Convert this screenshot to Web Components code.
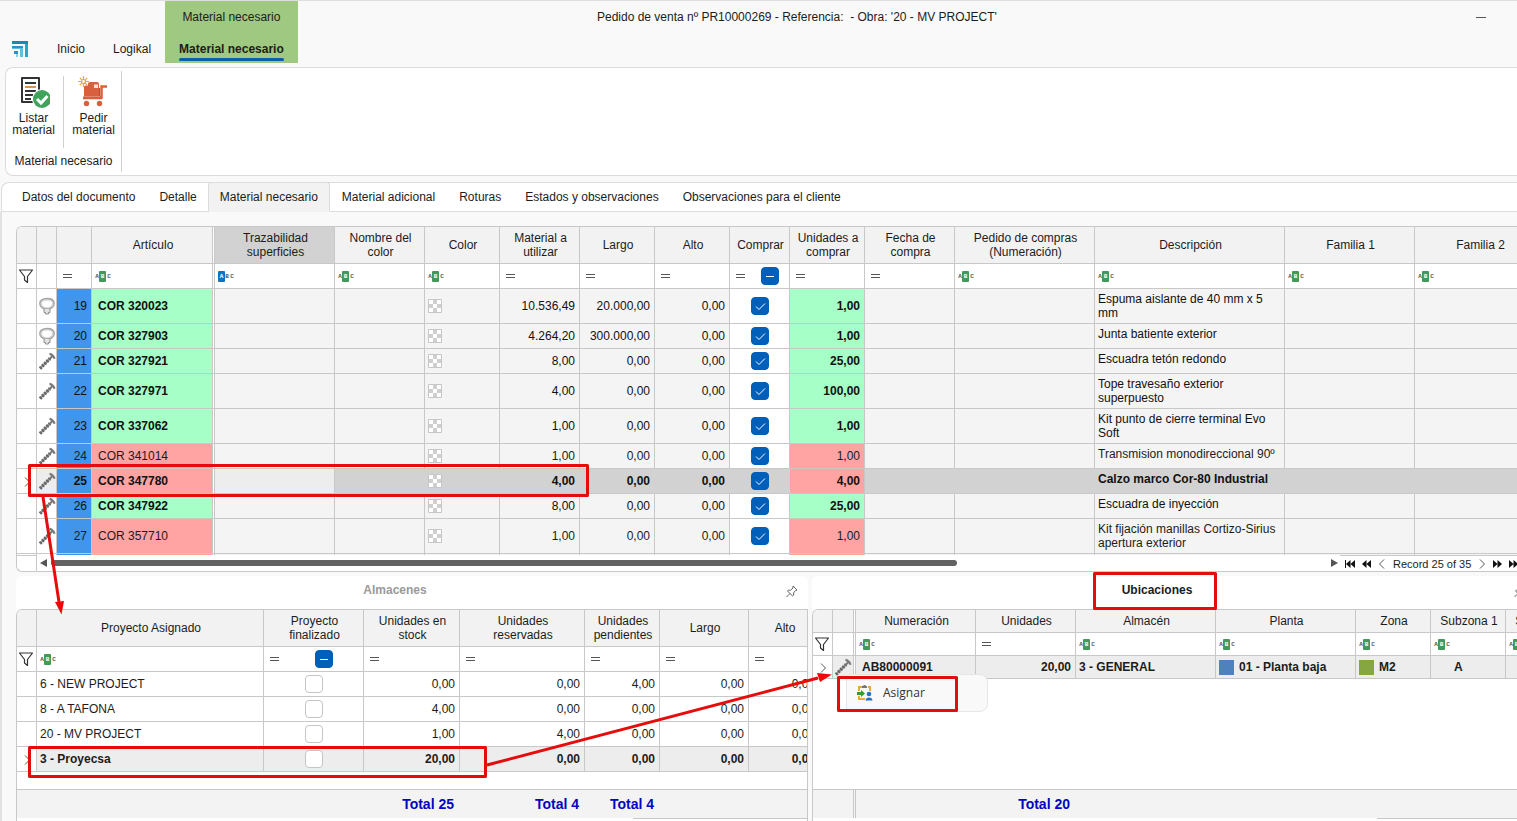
<!DOCTYPE html>
<html lang="es">
<head>
<meta charset="utf-8">
<title>Pedido de venta</title>
<style>
  html, body { margin: 0; height: 100%; }
  body { font: 12px/14px "Liberation Sans", Arial, sans-serif; color: #1c1c1c; background: #f9f9f9; overflow: hidden; }
</style>
</head>
<body>
<app-window></app-window>
<script>
const ICONS = {
  logo: [18, 18, '<path d="M1 1h16v16h-3V4H1z" fill="#2aa3d0"/><path d="M1 1h16v3H1z" fill="#1c86b8"/><path d="M1 6h11v11H9V9H1z" fill="#62bfe0"/><path d="M1 6h11v2H1z" fill="#2a93c4"/><path d="M3 11h4v6H5v-3H3z" fill="#8ad0ea"/><path d="M3 11h4v3H3z" fill="#2a93c4"/>'],
  list: [32, 32, '<path d="M21 18V2H4v24h11" fill="#fff" stroke="#333" stroke-width="2" stroke-linejoin="round"/><path d="M7 7h11M7 15h11M7 19h8M7 23h6" stroke="#333" stroke-width="1.800"/><path d="M7 11h11" stroke="#d9924e" stroke-width="2"/><circle cx="24" cy="23" r="10" fill="#fff"/><circle cx="24" cy="23" r="9" fill="#3fa45b"/><path d="M19 23l4 4 6.500-7" fill="none" stroke="#fff" stroke-width="3"/>'],
  cart: [32, 32, '<path d="M6 20v-9q0-1.500 1.500-1.500H10V8q0-2 2-2h7q2 0 2 2v12z" fill="#d8603f"/><path d="M16 8.500h4v3.500h-4z" fill="#f7e3dc"/><path d="M21 12h1v8h-1z" fill="#b94e33"/><path d="M29 10.500h-5.500v11h-18M24 22h-19" stroke="#d8603f" stroke-width="2.500" fill="none"/><circle cx="8.500" cy="27.500" r="2.700" fill="#d8603f"/><circle cx="21.500" cy="27.500" r="2.700" fill="#d8603f"/><circle cx="5.500" cy="5.500" r="4" fill="#fff"/><path d="M5.500 0v3M5.500 8v3M0 5.500h3M8 5.500h3M1.800 1.800l2 2M7.200 7.200l2 2M1.800 9.200l2-2M7.200 3.800l2-2" stroke="#e6a649" stroke-width="1.200"/><circle cx="5.500" cy="5.500" r="2" fill="#fff" stroke="#e6a649" stroke-width="1.200"/>'],
  funnel: [16, 16, '<path d="M1.500 2h13L9.500 8.500v6l-3-2.500V8.500z" fill="none" stroke="#333" stroke-width="1.200" stroke-linejoin="round"/>'],
  equals: [9, 5, '<path d="M0 .5h9M0 3.500h9" stroke="#555"/>'],
  gasket: [18, 18, '<path d="M9 1.500C4.500 1.500 1.800 3.500 1.800 6.500s3 5 5.200 5.500h4c2.200-.5 5.200-2.500 5.200-5.500s-2.700-5-7.200-5z" fill="#d8d8d8" stroke="#a4a4a4" stroke-width="1.400"/><path d="M9 3.500C5.800 3.500 4 4.800 4 6.500S6 10 8 10.300h2c2-.3 4-2.100 4-3.800s-1.800-3-5-3z" fill="#fff"/><path d="M6 12v3.500h1.500V17h3v-1.500H12V12" fill="#e2e2e2" stroke="#8e8e8e"/>'],
  screw: [18, 18, '<path d="M2 16.500L12 6.500" stroke="#9a9a9a" stroke-width="2"/><path d="M2 16.500L12 6.500" stroke="#666" stroke-width="3.400" stroke-dasharray="2 1.200"/><path d="M11 7.500L15 3.500" stroke="#777" stroke-width="2"/><path d="M11.500 1.800c2 .2 4.500 2.700 5 5" fill="none" stroke="#7a7a7a" stroke-width="2.200"/>'],
  texture: [14, 14, '<path d="M.5.5h13v13H.5z" fill="#fff" stroke="#c6c6c6"/><path d="M5 1h4v4H5zM1 5h4v4H1zM9 5h4v4H9zM5 9h4v4H5z" fill="#cfcfcf"/>'],
  chevron: [8, 10, '<path d="M2 .5L6.500 5 2 9.500" fill="none" stroke="#555" stroke-width="1"/>'],
  back: [8, 10, '<path d="M6 .5L1.500 5 6 9.500" fill="none" stroke="#555" stroke-width="1"/>'],
  triLeft: [7, 8, '<path d="M7 0v8L0 4z" fill="#555"/>'],
  triRight: [7, 8, '<path d="M0 0v8l7-4z" fill="#555"/>'],
  first: [10, 8, '<path d="M0 0h1v8H0zM5.500 0v8L1 4zM10 0v8L5.500 4z" fill="#111"/>'],
  rewind: [9, 8, '<path d="M4.500 0v8L0 4zM9 0v8L4.500 4z" fill="#111"/>'],
  forward: [9, 8, '<path d="M0 0v8l4.500-4zM4.500 0v8L9 4z" fill="#111"/>'],
  last: [10, 8, '<path d="M0 0v8l4.500-4zM4.500 0v8L9 4zM9 0h1v8H9z" fill="#111"/>'],
  pin: [12, 12, '<path d="M7 1l4 4-1 .5-.5 0-2 2.500.3 2L6.500 11 1.500 6l1-1 2 .3L7 3z" fill="none" stroke="#666"/><path d="M4 8.500L.5 12" stroke="#666"/>'],
  assign: [16, 16, '<path d="M5 2H2v4M11 2h2v4M2 11v3h6" fill="none" stroke="#e8aa3a" stroke-width="2"/><path d="M5 3V1h1.500V0h2v1H10v2z" fill="#777"/><path d="M0 7h4V5l4 3.500L4 12v-2H0z" fill="#2d9a3c"/><circle cx="12" cy="9" r="2.300" fill="#1f73c9"/><path d="M8.500 15.500c0-4 7-4 7 0z" fill="#1f73c9"/>'],
  minimize: [10, 1, '<path d="M0 0h10v1H0z" fill="#555"/>']
};

class UiIcon extends HTMLElement {
  connectedCallback() {
    const [w, h, body] = ICONS[this.getAttribute('name')];
    this.attachShadow({ mode: 'open' }).innerHTML =
      `<style>:host{display:inline-flex;flex:none}svg{display:block}</style>
       <svg width="${w}" height="${h}" viewBox="0 0 ${w} ${h}" aria-hidden="true">${body}</svg>`;
  }
}
customElements.define('ui-icon', UiIcon);

/* Text filter marker: "contains" highlights B, "starts with" highlights A */
class AbcMark extends HTMLElement {
  connectedCallback() {
    const start = this.hasAttribute('start');
    this.attachShadow({ mode: 'open' }).innerHTML =
      `<style>
        :host{display:inline-flex;flex:none;align-items:center;height:11px;font:bold 6px/11px "Liberation Mono",monospace;color:#555}
        span{width:4px;text-align:center}
        span:last-child{margin-left:1px}
        .on{width:7px;border-radius:1px;color:#fff;background:${start ? '#0b74c8' : '#43995a'}}
      </style>${start ? '<span class="on">A</span><span>B</span><span>C</span>' : '<span>A</span><span class="on">B</span><span>C</span>'}`;
  }
}
customElements.define('abc-mark', AbcMark);

class CheckBox extends HTMLElement {
  connectedCallback() {
    const state = this.getAttribute('state');
    this.attachShadow({ mode: 'open' }).innerHTML =
      `<style>
        :host{display:inline-flex;flex:none}
        input{appearance:none;box-sizing:border-box;width:18px;height:18px;margin:0;border:1px solid #c4c4c4;border-radius:4px;background:#fff center/18px 18px no-repeat}
        input:checked,input:indeterminate{border-color:#005fb8;background-color:#005fb8}
        label{display:grid;position:relative}
        svg{position:absolute;inset:0;pointer-events:none}
      </style>
      <label><input type="checkbox" aria-label="${this.getAttribute('label')}"${state === 'on' ? ' checked' : ''}>
      <svg width="18" height="18" fill="none" stroke="#fff">${state === 'on' ? '<path d="M5 9.500l3 3 6-6"/>' : state === 'mixed' ? '<path d="M5 9.500h8"/>' : ''}</svg></label>`;
    this.shadowRoot.querySelector('input').indeterminate = state === 'mixed';
  }
}
customElements.define('check-box', CheckBox);

/* Grid with header, filter row and body; columns and rows are set as properties */
class DataGrid extends HTMLElement {
  set data({ cols, rows, head, totals }) {
    const root = this.shadowRoot || this.attachShadow({ mode: 'open' });
    const width = cols.reduce((s, c) => s + c.w, 0);
    const group = `<colgroup>${cols.map(c => `<col style="width:${c.w}px">`).join('')}</colgroup>`;
    const cls = c => [c.a || 'l', c.split ? 'split' : '', c.cls || ''].join(' ');
    const filter = c => {
      const name = (c.t || 'fila').replace('\n', ' ');
      const box = `<input type="text" aria-label="Filtro ${name}">`;
      if (c.f === 'funnel') return '<ui-icon name="funnel"></ui-icon>';
      if (c.f === 'abc') return `<div class="f"><abc-mark${c.start ? ' start' : ''}></abc-mark>${box}</div>`;
      if (c.f === 'eq') return `<div class="f eq"><ui-icon name="equals"></ui-icon>${box}</div>`;
      if (c.f === 'check') return `<div class="f eq"><ui-icon name="equals"></ui-icon><div class="mid"><check-box state="mixed" label="Filtro ${name}"></check-box></div></div>`;
      return '';
    };
    root.innerHTML = `<style>
      :host{display:flex;flex-direction:column;flex:1;min-height:0;overflow:hidden;border:1px solid #c8c8c8;border-width:1px 0 0 1px;border-top-left-radius:6px;background:#fff}
      .view{flex:1;min-height:0;overflow:hidden}
      table{table-layout:fixed;width:${width}px;border-spacing:0}
      th,td{box-sizing:border-box;padding:0 3px;border:solid #c8c8c8;border-width:0 1px 1px 0;overflow:hidden;background-clip:padding-box !important}
      .split{border-right:3px double #c8c8c8}
      th{height:${head}px;padding:0 2px 0 4px;background:#f2f2f2;font-weight:normal;white-space:pre-line}
      th.sel{background:#d2d2d2}
      .filters td{height:${head > 30 ? 25 : 23}px;background:#fff;text-align:left}
      .filters td.ind{padding:0 1px}
      .f{display:flex;align-items:center;gap:2px}
      .f.eq{padding-left:3px;gap:8px}
      .f input{flex:1;width:0;min-width:0;height:16px;box-sizing:border-box;border:0;padding:0;background:none;font:inherit;outline:0}
      .mid{flex:1;display:flex;justify-content:center;margin-right:-1px}
      ui-icon,check-box{vertical-align:middle}
      .l{text-align:left}.c{text-align:center}.r{text-align:right}
      th{text-align:center}
      tbody td.r{padding-right:4px}
      tbody td.pad{padding-left:6px}
      tbody td.top{vertical-align:top;padding-top:3px}
      tbody td.ind{padding:0;text-align:center}
      tbody td.pic{padding:0;text-align:center}
      tbody td.ro{background:#f4f4f4}
      tbody td.num{background:#4195ea}
      tbody .green td.st{background:#a5ffc6}
      tbody .red td.st{background:#ffa3a3}
      .b td{color:#111}
      .b td.bold,.cur td{font-weight:bold}
      .cur td.pic,.cur td.lite{background:#ededed}
      .cur td.full{background:#d2d2d2;border-right-color:#d2d2d2}
      .sw{display:flex;align-items:center;gap:5px}
      .sw i{width:15px;height:15px;background:var(--c)}
      .totals{flex:none;height:28px;border-top:1px solid #c8c8c8;background:#f3f3f3;overflow:hidden}
      .totals td{height:28px;border-bottom:0;border-right-color:transparent;padding:0 5px;text-align:right;font:bold 14px/16px "Liberation Sans",Arial,sans-serif;color:#0505c0}
      .totals td.split{border-right-color:#c8c8c8}
      .strip{flex:none;height:3px;display:flex;justify-content:flex-end}
      .strip i{width:22%;border-top:1px solid #c8c8c8}
    </style>
    <div class="view"><table>${group}
      <thead><tr>${cols.map(c => `<th scope="col" class="${c.split ? 'split' : ''} ${c.sel ? 'sel' : ''}">${c.t || ''}</th>`).join('')}</tr>
      <tr class="filters">${cols.map(c => `<td class="${cls(c)}">${filter(c)}</td>`).join('')}</tr></thead>
      <tbody>${rows.map(r => `<tr class="${r.c || ''}" style="height:${r.h}px">${cols.map((c, i) => `<td class="${cls(c)}">${r.v[i] ?? ''}</td>`).join('')}</tr>`).join('')}</tbody>
    </table></div>
    ${totals ? `<div class="totals"><table>${group}<tr>${cols.map((c, i) => `<td class="${c.split ? 'split' : ''}">${totals[i] || ''}</td>`).join('')}</tr></table></div><div class="strip"><i></i></div>` : ''}`;
  }
}
customElements.define('data-grid', DataGrid);

class AppHeader extends HTMLElement {
  connectedCallback() {
    this.attachShadow({ mode: 'open' }).innerHTML = `<style>
      :host{display:flex;height:62px;border-top:1px solid #dedede}
      .logo{width:43px;box-sizing:border-box;padding:39px 0 0 11px}
      nav{display:flex;align-items:flex-end}
      a{display:block;padding:0 14px;line-height:28px;color:inherit;text-decoration:none}
      .ctx{background:#9fc880;text-align:center}
      .ctx span{display:block;line-height:32px;height:34px}
      .ctx a{font-weight:bold;height:28px}
      .ctx a::after{content:"";display:block;height:3px;margin:-5px 0 2px;border-radius:2px;background:#0b5fa5}
      h1{flex:1;margin:0;font:inherit;line-height:32px;text-align:center;white-space:nowrap}
      .win{width:221px;display:flex;justify-content:flex-end;align-items:flex-start;box-sizing:border-box;padding-right:13px}
      button{width:46px;height:32px;border:0;padding:0;background:none;display:grid;place-items:center}
    </style>
    <div class="logo"><ui-icon name="logo"></ui-icon></div>
    <nav><a href="#inicio">Inicio</a><a href="#logikal">Logikal</a>
    <div class="ctx"><span>Material necesario</span><a href="#material">Material necesario</a></div></nav>
    <h1>Pedido de venta nº PR10000269 - Referencia:&nbsp; - Obra: '20 - MV PROJECT'</h1>
    <div class="win"><button aria-label="Minimizar"><ui-icon name="minimize"></ui-icon></button></div>`;
  }
}
customElements.define('app-header', AppHeader);

class RibbonButton extends HTMLElement {
  connectedCallback() {
    this.attachShadow({ mode: 'open' }).innerHTML = `<style>
      :host{display:block;width:55px}
      button{width:100%;height:72px;border:0;padding:0;background:none;color:inherit;font:12px/12px "Liberation Sans",Arial,sans-serif;display:flex;flex-direction:column;align-items:center;gap:4px}
    </style><button><ui-icon name="${this.getAttribute('icon')}"></ui-icon><span><slot></slot></span></button>`;
  }
}
customElements.define('ribbon-button', RibbonButton);

class RibbonBar extends HTMLElement {
  connectedCallback() {
    this.attachShadow({ mode: 'open' }).innerHTML = `<style>
      :host{display:block;margin:4px 0 0 5px;height:107px;border:1px solid #dcdcdc;border-right:0;border-radius:8px 0 0 8px;background:#fff}
      .group{display:flex;flex-direction:column;width:115px;height:101px;margin-top:3px;border-right:1px solid #d0d0d4;box-sizing:content-box}
      .row{display:flex;gap:2px;padding-top:5px}
      .sep{width:1px;background:#d0d0d4}
      .name{text-align:center;padding-top:6px}
    </style>
    <div class="group"><div class="row"><ribbon-button icon="list">Listar<br>material</ribbon-button><div class="sep"></div><ribbon-button icon="cart">Pedir<br>material</ribbon-button></div>
    <div class="name">Material necesario</div></div>`;
  }
}
customElements.define('ribbon-bar', RibbonBar);

class DocTabs extends HTMLElement {
  connectedCallback() {
    const tabs = ['Datos del documento', 'Detalle', 'Material necesario', 'Material adicional', 'Roturas', 'Estados y observaciones', 'Observaciones para el cliente'];
    this.attachShadow({ mode: 'open' }).innerHTML = `<style>
      :host{display:flex;height:28px;margin:6px 0 0 1px;padding-left:8px;border:1px solid #dcdcdc;border-right:0;border-radius:8px 0 0 0;background:#fff}
      a{padding:0 12px;line-height:28px;color:inherit;text-decoration:none;white-space:nowrap}
      .on{padding:0 11px;margin:-1px 0 -1px -1px;border:1px solid #dcdcdc;border-bottom-color:#f2f2f2;border-radius:4px 4px 0 0;background:#f2f2f2}
    </style>${tabs.map((t, i) => `<a href="#t${i}"${i === 2 ? ' class="on" aria-current="page"' : ''}>${t}</a>`).join('')}`;
  }
}
customElements.define('doc-tabs', DocTabs);

class RecordBar extends HTMLElement {
  connectedCallback() {
    this.attachShadow({ mode: 'open' }).innerHTML = `<style>
      :host{display:flex;flex:none;height:16px;border:1px solid #c8c8c8;border-width:0 0 1px 1px;border-bottom-left-radius:6px;background:#fff}
      .corner{width:19px;box-sizing:border-box;width:20px;border:1px solid #c8c8c8;border-width:1px 1px 0 0}
      .scroll{flex:1;display:flex;align-items:center;gap:4px;padding:0 2px 0 3px}
      .track{flex:1}
      .thumb{width:71%;height:6px;border-radius:3px;background:#636363}
      .pager{display:flex;align-items:center;gap:7px;width:172px;padding-left:5px;border-top:1px solid #c8c8c8;overflow:hidden;white-space:nowrap;font-size:11px}
      button{border:0;padding:0;background:none;display:flex;flex:none}
    </style>
    <div class="corner"></div>
    <div class="scroll"><ui-icon name="triLeft"></ui-icon><div class="track"><div class="thumb"></div></div><ui-icon name="triRight"></ui-icon></div>
    <div class="pager"><button aria-label="Primero"><ui-icon name="first"></ui-icon></button><button aria-label="Página anterior"><ui-icon name="rewind"></ui-icon></button><button aria-label="Anterior"><ui-icon name="back"></ui-icon></button><span>Record 25 of 35</span><button aria-label="Siguiente"><ui-icon name="chevron"></ui-icon></button><button aria-label="Página siguiente"><ui-icon name="forward"></ui-icon></button><button aria-label="Último"><ui-icon name="last"></ui-icon></button></div>`;
  }
}
customElements.define('record-bar', RecordBar);

class DockPanel extends HTMLElement {
  connectedCallback() {
    this.attachShadow({ mode: 'open' }).innerHTML = `<style>
      :host{display:flex;flex-direction:column;position:relative;min-width:0;background:#fff;border-radius:6px 6px 0 0}
      header{display:flex;align-items:center;height:33px;flex:none}
      h2{flex:1;margin:0;padding-bottom:5px;font:bold 12px/14px "Liberation Sans",Arial,sans-serif;text-align:center;color:var(--title,#1c1c1c)}
      button{width:34px;height:30px;border:0;padding:0 0 0 2px;background:none;display:grid;place-items:center;margin-bottom:4px}
    </style><header><h2>${this.getAttribute('heading')}</h2><button aria-label="Fijar panel"><ui-icon name="pin"></ui-icon></button></header><slot></slot>`;
  }
}
customElements.define('dock-panel', DockPanel);

class ContextMenu extends HTMLElement {
  connectedCallback() {
    this.attachShadow({ mode: 'open' }).innerHTML = `<style>
      :host{display:block;box-sizing:border-box;width:142px;height:38px;padding:1px;border:1px solid #e6e6e6;border-radius:4px 8px 8px 4px;background:#f9f9f9}
      button{display:flex;align-items:center;gap:10px;width:100%;height:34px;padding:0 9px;border:0;background:none;color:#333;font:12px/16px "Open Sans","Noto Sans",sans-serif}
    </style><button role="menuitem"><ui-icon name="assign"></ui-icon><slot></slot></button>`;
  }
}
customElements.define('context-menu', ContextMenu);

/* Red callouts drawn over the window */
class CalloutLayer extends HTMLElement {
  connectedCallback() {
    this.attachShadow({ mode: 'open' }).innerHTML = `<style>
      :host{position:absolute;inset:0;pointer-events:none;overflow:hidden}svg{display:block;width:100%;height:100%}
    </style><svg fill="none" stroke="#e60c0c" stroke-width="3" stroke-linejoin="round">
      <rect x="29.500" y="465.500" width="558" height="30"/><rect x="29.500" y="747.500" width="456" height="29"/>
      <rect x="1094.500" y="573.500" width="121" height="35"/><rect x="838.500" y="677.500" width="118" height="33"/>
      <path d="M43 497L59 602M487 765L818 678"/>
      <path d="M55 602l9-1-2.500 13.500zM817 673l3 9 12-7.500z" fill="#f00808" stroke="none"/></svg>`;
  }
}
customElements.define('callout-layer', CalloutLayer);

class AppWindow extends HTMLElement {
  connectedCallback() {
    const root = this.attachShadow({ mode: 'open' });
    root.innerHTML = `<style>
      :host{display:flex;flex-direction:column;height:100vh;position:relative;overflow:hidden}
      app-header,ribbon-bar,doc-tabs{flex:none}
      main{flex:1;min-height:0;display:flex;flex-direction:column;box-sizing:border-box;padding:14px 0 0 14px;border-left:2px solid #e2e2e2}
      .docks{flex:none;display:grid;grid-template-columns:792fr 724fr;gap:4px;height:245px;margin:4px -19px 0 0}
      .alm{--title:#9a9a9a}
      .alm data-grid{border-right-width:1px}
      context-menu{position:absolute;left:34px;top:98px}
    </style>
    <app-header></app-header><ribbon-bar></ribbon-bar><doc-tabs></doc-tabs>
    <main><data-grid id="mat"></data-grid><record-bar></record-bar>
      <div class="docks">
        <dock-panel class="alm" heading="Almacenes"><data-grid id="alm"></data-grid></dock-panel>
        <dock-panel heading="Ubicaciones"><data-grid id="ubi"></data-grid><context-menu role="menu">Asignar</context-menu></dock-panel>
      </div></main>
    <callout-layer></callout-layer>`;
    const icon = n => `<ui-icon name="${n}"></ui-icon>`;
    const check = (s, l) => `<check-box state="${s}" label="${l}"></check-box>`;
    const mat = (h, pic, n, code, used, largo, units, desc, color, bold, cur) => ({
      h, c: `${color} ${bold ? 'b' : ''} ${cur ? 'cur' : ''}`,
      v: [cur ? icon('chevron') : '', pic && icon(pic), n, code, '', '', pic && icon('texture'), used, largo, pic && '0,00', pic && check('on', 'Comprar ' + code), units, '', '', desc, '', '']
    });
    root.getElementById('mat').data = {
      head: 37,
      cols: [
        { w: 20, f: 'funnel', cls: 'ind' }, { w: 20, cls: 'pic' }, { w: 35, f: 'eq', a: 'r', cls: 'num' },
        { w: 123, t: 'Artículo', f: 'abc', split: 1, cls: 'st pad bold' },
        { w: 120, t: 'Trazabilidad\nsuperficies', f: 'abc', start: 1, sel: 1, cls: 'ro lite' },
        { w: 90, t: 'Nombre del\ncolor', f: 'abc', cls: 'ro full' }, { w: 75, t: 'Color', f: 'abc', cls: 'ro full' },
        { w: 80, t: 'Material a\nutilizar', f: 'eq', a: 'r', cls: 'ro full' }, { w: 75, t: 'Largo', f: 'eq', a: 'r', cls: 'ro full' },
        { w: 75, t: 'Alto', f: 'eq', a: 'r', cls: 'ro full' }, { w: 60, t: 'Comprar', f: 'check', a: 'c', cls: 'full' },
        { w: 75, t: 'Unidades a\ncomprar', f: 'eq', a: 'r', cls: 'st bold' }, { w: 90, t: 'Fecha de\ncompra', f: 'eq', cls: 'ro full' },
        { w: 140, t: 'Pedido de compras\n(Numeración)', f: 'abc', cls: 'ro full' }, { w: 190, t: 'Descripción', f: 'abc', cls: 'ro full top' },
        { w: 130, t: 'Familia 1', f: 'abc', cls: 'ro full' }, { w: 130, t: 'Familia 2', f: 'abc', cls: 'ro full' }
      ],
      rows: [
        mat(35, 'gasket', 19, 'COR 320023', '10.536,49', '20.000,00', '1,00', 'Espuma aislante de 40 mm x 5 mm', 'green', 1),
        mat(25, 'gasket', 20, 'COR 327903', '4.264,20', '300.000,00', '1,00', 'Junta batiente exterior', 'green', 1),
        mat(25, 'screw', 21, 'COR 327921', '8,00', '0,00', '25,00', 'Escuadra tetón redondo', 'green', 1),
        mat(35, 'screw', 22, 'COR 327971', '4,00', '0,00', '100,00', 'Tope travesaño exterior superpuesto', 'green', 1),
        mat(35, 'screw', 23, 'COR 337062', '1,00', '0,00', '1,00', 'Kit punto de cierre terminal Evo Soft', 'green', 1),
        mat(25, 'screw', 24, 'COR 341014', '1,00', '0,00', '1,00', 'Transmision monodireccional 90º', 'red', 0),
        mat(25, 'screw', 25, 'COR 347780', '4,00', '0,00', '4,00', 'Calzo marco Cor-80 Industrial', 'red', 1, 1),
        mat(25, 'screw', 26, 'COR 347922', '8,00', '0,00', '25,00', 'Escuadra de inyección', 'green', 1),
        mat(35, 'screw', 27, 'COR 357710', '1,00', '0,00', '1,00', 'Kit fijación manillas Cortizo-Sirius apertura exterior', 'red', 0),
        mat(25, '', '', '', '', '', '', '', 'red', 0)
      ]
    };
    const alm = (name, s, r, p, cur) => ({ h: 25, c: cur ? 'cur' : '', v: [cur ? icon('chevron') : '', name, check('off', 'Finalizado ' + name), s, r, p, '0,00', '0,00'] });
    root.getElementById('alm').data = {
      head: 37,
      cols: [
        { w: 20, f: 'funnel', cls: 'ind' }, { w: 227, t: 'Proyecto Asignado', f: 'abc', cls: 'lite' },
        { w: 100, t: 'Proyecto\nfinalizado', f: 'check', a: 'c', cls: 'lite' }, { w: 96, t: 'Unidades en\nstock', f: 'eq', a: 'r', cls: 'lite' },
        { w: 125, t: 'Unidades\nreservadas', f: 'eq', a: 'r', cls: 'lite' }, { w: 75, t: 'Unidades\npendientes', f: 'eq', a: 'r', cls: 'lite' },
        { w: 89, t: 'Largo', f: 'eq', a: 'r', cls: 'lite' }, { w: 71, t: 'Alto', f: 'eq', a: 'r', cls: 'lite' }
      ],
      rows: [alm('6 - NEW PROJECT', '0,00', '0,00', '4,00'), alm('8 - A TAFONA', '4,00', '0,00', '0,00'), alm('20 - MV PROJECT', '1,00', '4,00', '0,00'), alm('3 - Proyecsa', '20,00', '0,00', '0,00', 1)],
      totals: ['', '', '', 'Total 25', 'Total 4', 'Total 4', '', '']
    };
    const sw = (c, t) => `<div class="sw"><i style="--c:${c}"></i>${t}</div>`;
    root.getElementById('ubi').data = {
      head: 23,
      cols: [
        { w: 20, f: 'funnel', cls: 'ind' }, { w: 23, split: 1, cls: 'pic' }, { w: 120, t: 'Numeración', f: 'abc', cls: 'lite pad' },
        { w: 100, t: 'Unidades', f: 'eq', a: 'r', cls: 'lite' }, { w: 140, t: 'Almacén', f: 'abc', cls: 'lite' }, { w: 140, t: 'Planta', f: 'abc', cls: 'lite' },
        { w: 75, t: 'Zona', f: 'abc', cls: 'lite' }, { w: 75, t: 'Subzona 1', f: 'abc', cls: 'lite' }, { w: 75, t: 'Subzona 2', f: 'abc', cls: 'lite' }
      ],
      rows: [{ h: 23, c: 'cur', v: [icon('chevron'), icon('screw'), 'AB80000091', '20,00', '3 - GENERAL', sw('#4e82bf', '01 - Planta baja'), sw('#86a640', 'M2'), sw('transparent', 'A'), ''] }],
      totals: ['', '', '', 'Total 20', '', '', '', '', '']
    };
  }
}
customElements.define('app-window', AppWindow);
</script>
</body>
</html>
